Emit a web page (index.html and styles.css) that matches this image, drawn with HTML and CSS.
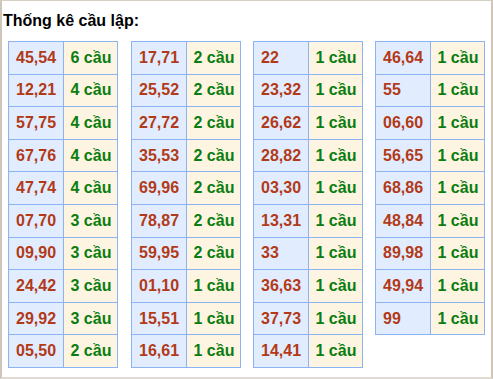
FILE: index.html
```html
<!DOCTYPE html>
<html lang="vi">
<head>
<meta charset="utf-8">
<link rel="stylesheet" href="styles.css">
</head>
<body>
<div class="box">
  <div class="title">Thống kê cầu lập:</div>
  <div class="tables">
    <table class="tbl">
      <tr><td class="num">45,54</td><td class="cnt">6 cầu</td></tr>
      <tr><td class="num">12,21</td><td class="cnt">4 cầu</td></tr>
      <tr><td class="num">57,75</td><td class="cnt">4 cầu</td></tr>
      <tr><td class="num">67,76</td><td class="cnt">4 cầu</td></tr>
      <tr><td class="num">47,74</td><td class="cnt">4 cầu</td></tr>
      <tr><td class="num">07,70</td><td class="cnt">3 cầu</td></tr>
      <tr><td class="num">09,90</td><td class="cnt">3 cầu</td></tr>
      <tr><td class="num">24,42</td><td class="cnt">3 cầu</td></tr>
      <tr><td class="num">29,92</td><td class="cnt">3 cầu</td></tr>
      <tr><td class="num">05,50</td><td class="cnt">2 cầu</td></tr>
    </table>
    <table class="tbl">
      <tr><td class="num">17,71</td><td class="cnt">2 cầu</td></tr>
      <tr><td class="num">25,52</td><td class="cnt">2 cầu</td></tr>
      <tr><td class="num">27,72</td><td class="cnt">2 cầu</td></tr>
      <tr><td class="num">35,53</td><td class="cnt">2 cầu</td></tr>
      <tr><td class="num">69,96</td><td class="cnt">2 cầu</td></tr>
      <tr><td class="num">78,87</td><td class="cnt">2 cầu</td></tr>
      <tr><td class="num">59,95</td><td class="cnt">2 cầu</td></tr>
      <tr><td class="num">01,10</td><td class="cnt">1 cầu</td></tr>
      <tr><td class="num">15,51</td><td class="cnt">1 cầu</td></tr>
      <tr><td class="num">16,61</td><td class="cnt">1 cầu</td></tr>
    </table>
    <table class="tbl">
      <tr><td class="num">22</td><td class="cnt">1 cầu</td></tr>
      <tr><td class="num">23,32</td><td class="cnt">1 cầu</td></tr>
      <tr><td class="num">26,62</td><td class="cnt">1 cầu</td></tr>
      <tr><td class="num">28,82</td><td class="cnt">1 cầu</td></tr>
      <tr><td class="num">03,30</td><td class="cnt">1 cầu</td></tr>
      <tr><td class="num">13,31</td><td class="cnt">1 cầu</td></tr>
      <tr><td class="num">33</td><td class="cnt">1 cầu</td></tr>
      <tr><td class="num">36,63</td><td class="cnt">1 cầu</td></tr>
      <tr><td class="num">37,73</td><td class="cnt">1 cầu</td></tr>
      <tr><td class="num">14,41</td><td class="cnt">1 cầu</td></tr>
    </table>
    <table class="tbl">
      <tr><td class="num">46,64</td><td class="cnt">1 cầu</td></tr>
      <tr><td class="num">55</td><td class="cnt">1 cầu</td></tr>
      <tr><td class="num">06,60</td><td class="cnt">1 cầu</td></tr>
      <tr><td class="num">56,65</td><td class="cnt">1 cầu</td></tr>
      <tr><td class="num">68,86</td><td class="cnt">1 cầu</td></tr>
      <tr><td class="num">48,84</td><td class="cnt">1 cầu</td></tr>
      <tr><td class="num">89,98</td><td class="cnt">1 cầu</td></tr>
      <tr><td class="num">49,94</td><td class="cnt">1 cầu</td></tr>
      <tr><td class="num">99</td><td class="cnt">1 cầu</td></tr>
    </table>
  </div>
</div>
</body>
</html>
```

FILE: styles.css
```css
html, body {
  margin: 0;
  padding: 0;
  background: #ffffff;
}

.box {
  box-sizing: border-box;
  width: 493px;
  height: 379px;
  border-left: 2px solid #cec6b8;
  border-top: 1px solid #d6cfc3;
  border-right: 2px solid #cec6b8;
  border-bottom: 2px solid #e0dbd2;
  font-family: "Liberation Sans", Arial, sans-serif;
  overflow: hidden;
}

.title {
  margin: 11px 0 0 1px;
  font-size: 16px;
  line-height: 18px;
  font-weight: bold;
  color: #000;
}

.tables {
  display: flex;
  align-items: flex-start;
  margin-top: 11px;
  padding-left: 6px;
}

.tbl {
  border-collapse: collapse;
  width: 110px;
  table-layout: fixed;
}

.tbl:nth-child(2) { margin-left: 13px; }
.tbl:nth-child(3) { margin-left: 12px; }
.tbl:nth-child(4) { margin-left: 12px; }

.tbl tr {
  height: 32.6px;
}

.tbl td {
  border: 1px solid #8db4f2;
  padding: 0 0 0 7px;
  font-size: 16px;
  font-weight: bold;
  text-align: left;
  vertical-align: middle;
  white-space: nowrap;
}

.num {
  background: #e1edff;
  color: #b23a18;
}

.cnt {
  background: #fdf4e2;
  color: #0b7d10;
}
```
